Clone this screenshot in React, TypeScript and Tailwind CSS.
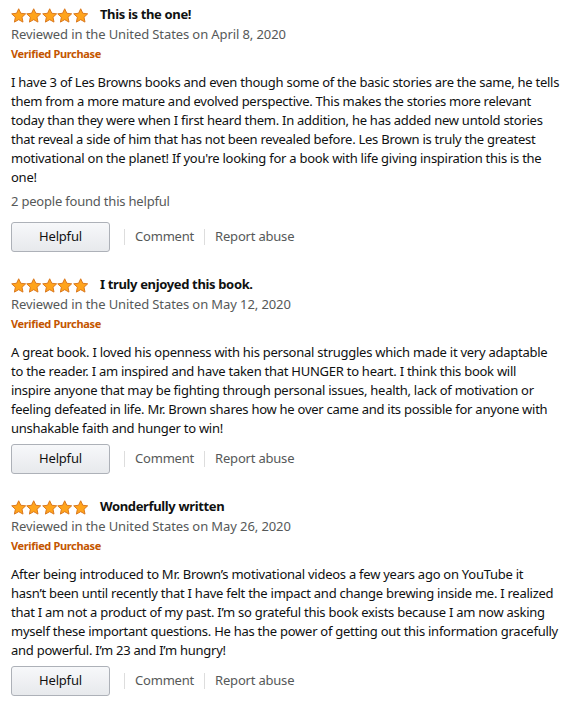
import React from "react";

const reviews = [
  {
    id: 1,
    title: "This is the one!",
    date: "April 8, 2020",
    lines: [
      "I have 3 of Les Browns books and even though some of the basic stories are the same, he tells",
      "them from a more mature and evolved perspective. This makes the stories more relevant",
      "today than they were when I first heard them. In addition, he has added new untold stories",
      "that reveal a side of him that has not been revealed before. Les Brown is truly the greatest",
      "motivational on the planet! If you're looking for a book with life giving inspiration this is the",
      "one!",
    ],
    helpful: "2 people found this helpful",
  },
  {
    id: 2,
    title: "I truly enjoyed this book.",
    date: "May 12, 2020",
    lines: [
      "A great book. I loved his openness with his personal struggles which made it very adaptable",
      "to the reader. I am inspired and have taken that HUNGER to heart. I think this book will",
      "inspire anyone that may be fighting through personal issues, health, lack of motivation or",
      "feeling defeated in life. Mr. Brown shares how he over came and its possible for anyone with",
      "unshakable faith and hunger to win!",
    ],
  },
  {
    id: 3,
    title: "Wonderfully written",
    date: "May 26, 2020",
    lines: [
      "After being introduced to Mr. Brown\u2019s motivational videos a few years ago on YouTube it",
      "hasn\u2019t been until recently that I have felt the impact and change brewing inside me. I realized",
      "that I am not a product of my past. I\u2019m so grateful this book exists because I am now asking",
      "myself these important questions. He has the power of getting out this information gracefully",
      "and powerful. I\u2019m 23 and I\u2019m hungry!",
    ],
  },
];

const Star = () => (
  <svg width="15.4" height="15" viewBox="0 0 24 23">
    <path
      d="M12 1l3.3 7 7.6.9-5.7 5.3 1.5 7.6L12 18l-6.7 3.8 1.5-7.6L1.1 8.9l7.6-.9z"
      fill="#ffa41c"
      stroke="#d9761c"
      strokeWidth="1.5"
      strokeLinejoin="round"
    />
  </svg>
);

const App = () => {
  return (
    <div className="bg-white min-h-[706px] pl-[11px] pr-[6px] pt-[5px] text-[#0f1111] font-['Noto_Sans',sans-serif]">
      {reviews.map((r) => (
        <div key={r.id} className="mb-[23px]">
          {/* Stars and title */}
          <div className="flex items-center h-5">
            <div className="flex">
              {[1, 2, 3, 4, 5].map((s) => (
                <Star key={s} />
              ))}
            </div>
            <span className="ml-[12px] text-[13px] font-bold tracking-[-0.35px]">{r.title}</span>
          </div>
          <p className="text-[13px] leading-[19px] text-[#565959] tracking-[-0.1px]">
            Reviewed in the United States on {r.date}
          </p>
          <p className="text-[11px] leading-[19px] font-bold text-[#c45500] tracking-[-0.35px]">
            Verified Purchase
          </p>

          <p className="mt-[10px] text-[13px] leading-[19px] text-[#0f1111] tracking-[-0.26px] whitespace-nowrap">
            {r.lines.map((l, i) => (
              <React.Fragment key={i}>
                {l}
                {i < r.lines.length - 1 && <br />}
              </React.Fragment>
            ))}
          </p>

          {r.helpful && (
            <p className="mt-[5px] text-[13px] leading-[19px] text-[#565959] tracking-[-0.2px]">{r.helpful}</p>
          )}

          {/* Actions */}
          <div className={`flex items-center tracking-[-0.2px] ${r.helpful ? "mt-[11px]" : "mt-[6px]"}`}>
            <button className="w-[99px] h-[30px] rounded-[3px] border border-[#adb1b8] bg-gradient-to-b from-[#f7f8fa] to-[#e7e9ec] text-[13px] text-[#111]">
              Helpful
            </button>
            <span className="ml-[14px] w-px h-[16px] bg-[#ddd]" />
            <span className="px-[10px] text-[13px] text-[#565959]">Comment</span>
            <span className="w-px h-[16px] bg-[#ddd]" />
            <span className="px-[10px] text-[13px] text-[#565959]">Report abuse</span>
          </div>
        </div>
      ))}
    </div>
  );
};

export default App;
